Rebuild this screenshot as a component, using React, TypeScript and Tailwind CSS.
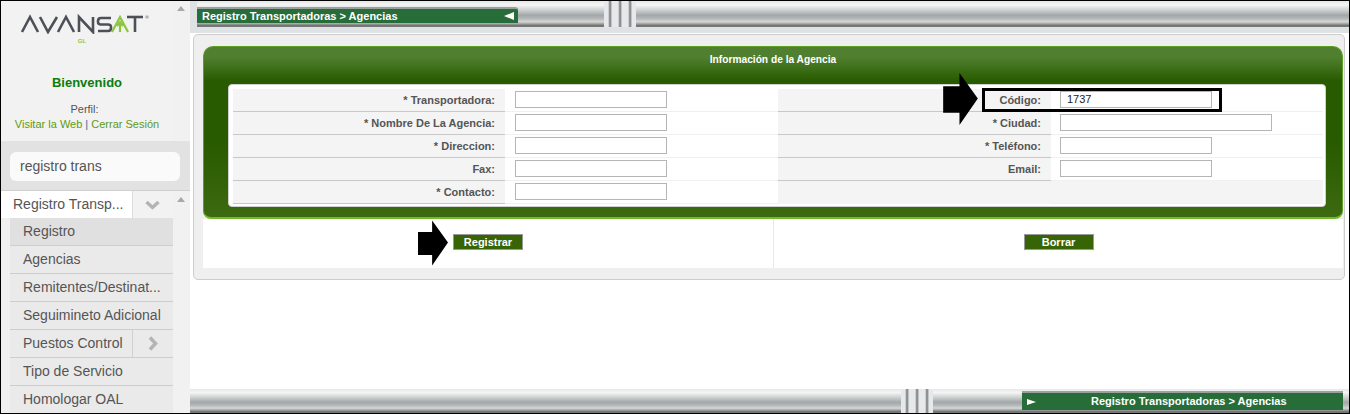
const font = "font-['Liberation_Sans',Arial,sans-serif]";

const menu = [
  { label: "Registro", active: true },
  { label: "Agencias" },
  { label: "Remitentes/Destinat..." },
  { label: "Seguimineto Adicional" },
  { label: "Puestos Control", more: true },
  { label: "Tipo de Servicio" },
  { label: "Homologar OAL" },
];

const fields = [
  { left: "* Transportadora:", right: "Código:", value: "1737" },
  { left: "* Nombre De La Agencia:", right: "* Ciudad:", wide: true },
  { left: "* Direccion:", right: "* Teléfono:" },
  { left: "Fax:", right: "Email:" },
  { left: "* Contacto:" },
];

function Logo() {
  return (
    <svg width="135" height="20" viewBox="0 0 135 20" className="block" role="img" aria-label="Avansat">
      <g fill="none" stroke="#4d5157" strokeWidth="2.6">
        <polyline points="2,18 10,3 18,18" />
        <polyline points="20,3 28,18 37,3" />
        <polyline points="38,18 46,3 54,18" />
        <polyline points="59,18 59,3 73,18 73,3" />
        <path d="M91 4 H81 Q78 4 78 7 V8 Q78 10.500 81 10.500 H88 Q91 10.500 91 13 V14 Q91 17 88 17 H78" />
        <polyline points="107,3 123,3" />
        <polyline points="115,3 115,18" />
      </g>
      <g fill="none" stroke="#8cc63f" strokeWidth="2.2">
        <polyline points="92,18 100,3 108,18" />
        <line x1="100" y1="9" x2="100" y2="18" />
        <polyline points="97,12 100,8 103,12" />
      </g>
      <circle cx="127" cy="3" r="1.800" fill="#b5b5b5" />
    </svg>
  );
}

function Grip() {
  return (
    <div className="flex w-[32px] h-full bg-[#e6e9eb]">
      <div className="w-[4px] ml-[4px] h-full bg-gradient-to-r from-[#eee] via-[#777] to-[#ddd]" />
      <div className="w-[4px] ml-[6px] h-full bg-gradient-to-r from-[#eee] via-[#777] to-[#ddd]" />
      <div className="w-[4px] ml-[6px] h-full bg-gradient-to-r from-[#eee] via-[#777] to-[#ddd]" />
    </div>
  );
}

const barBg =
  "bg-[linear-gradient(to_bottom,#e6e8e8_0%,#f4f5f5_15%,#c8cbcb_38%,#a3a7a7_55%,#b5b8b8_68%,#d6d8d8_80%,#a0a2a2_88%,#666_96%,#888_100%)]";

function Arrow({ className }: { className: string }) {
  return (
    <svg viewBox="0 0 34 51" className={className}>
      <polygon points="0,13 16,13 16,0 34,25 16,51 16,39 0,39" fill="#000" />
    </svg>
  );
}

function Field({ wide, value }: { wide?: boolean; value?: string }) {
  return (
    <input
      readOnly
      value={value ?? ""}
      className={`${wide ? "w-[212px]" : "w-[152px]"} h-[17px] border border-[#b5b5b5] bg-white px-[6px] text-[11px] text-[#222] ${font}`}
    />
  );
}

function Label({ text }: { text?: string }) {
  return (
    <div className={`h-[23px] bg-[#f4f4f4] flex items-center justify-end pr-[10px] text-[11px] font-bold text-[#555] ${text ? "border-b border-[#c8c8c8]" : ""}`}>
      {text}
    </div>
  );
}

export default function App() {
  return (
    <div className={`${font} relative flex w-[1350px] h-[414px] overflow-hidden bg-white border-t border-l border-r border-b border-black`}>
      {/* lateral */}
      <aside className="w-[189px] h-full shrink-0 flex flex-col bg-[#f0f0f0]">
        <div className="flex">
          <div className="w-[172px] h-[140px] bg-[#f2f2f2] flex flex-col items-center">
            <div className="mt-[13px] ml-[19px] self-start">
              <Logo />
            </div>
            <div className="mt-[3px] -ml-[10px] text-[6px] leading-[8px] font-bold text-[#8cc63f]">GL</div>
            <div className="mt-[28px] text-[13px] leading-[20px] font-bold text-[#0b7d0b]">Bienvenido</div>
            <div className="mt-[8px] -ml-[5px] text-[11px] leading-[16px] text-[#555]">Perfil:</div>
            <div className="text-[11px] leading-[15px] text-[#5f9a12] whitespace-nowrap">
              Visitar la Web <span className="text-[#2f6f9f]">|</span> Cerrar Sesión
            </div>
          </div>
          <div className="relative flex-1 bg-[#f1f1f1]">
            <div className="absolute left-[4px] top-[5px] border-x-[4px] border-x-transparent border-b-[5px] border-b-[#a8a8a8]" />
          </div>
        </div>
        <div className="h-[50px] shrink-0 bg-[#e2e2e2] border-b border-[#cfcfcf] pl-[9px] pt-[11px]">
          <div className="w-[170px] h-[29px] rounded-[6px] bg-[#fafafa] flex items-center pl-[10px] text-[14px] text-[#555]">
            registro trans
          </div>
        </div>
        <div className="flex flex-1 min-h-0">
          <div className="w-[172px] shrink-0 flex flex-col bg-[#f0f0f0]">
            <div className="h-[27px] shrink-0 flex bg-white">
              <div className="w-[132px] pl-[12px] text-[14px] leading-[27px] text-[#555] border-r border-[#ddd] whitespace-nowrap">
                Registro Transp...
              </div>
              <div className="flex-1 flex items-center justify-center bg-[#f2f2f2] pr-[1px]">
                <svg width="15" height="10" viewBox="0 0 15 10">
                  <polyline points="1.500,2 7.500,7.500 13.500,2" fill="none" stroke="#b4b4b4" strokeWidth="3.500" />
                </svg>
              </div>
            </div>
            {menu.map((item) => (
              <div
                key={item.label}
                className={`ml-[9px] h-[28px] shrink-0 flex border-b border-[#cdcdcd] ${item.active ? "bg-[#e0e0e0]" : "bg-[#eaeaea]"}`}
              >
                <div className={`${item.more ? "w-[123px] border-r border-[#d0d0d0]" : "w-full"} pl-[13px] whitespace-nowrap text-[14px] leading-[27px] text-[#555]`}>
                  {item.label}
                </div>
                {item.more && (
                  <div className="flex-1 flex items-center justify-center">
                    <svg width="10" height="15" viewBox="0 0 10 15">
                      <polyline points="2,1.500 7.500,7.500 2,13.500" fill="none" stroke="#b4b4b4" strokeWidth="3.500" />
                    </svg>
                  </div>
                )}
              </div>
            ))}
          </div>
          <div className="relative flex-1 bg-[#f1f1f1]">
            <div className="absolute left-[4px] top-[6px] border-x-[4px] border-x-transparent border-b-[5px] border-b-[#a8a8a8]" />
          </div>
        </div>
      </aside>

      {/* contenido */}
      <main className="flex-1 min-w-0 flex flex-col">
        <div className="h-[26px] shrink-0 flex items-start pt-[6px] pl-[7px] bg-[#dee2e5] relative">
          <div className={`absolute left-[7px] right-0 top-0 bottom-0 flex ${barBg}`}>
            <div className="ml-[407px]">
              <Grip />
            </div>
          </div>
          <div className="relative w-[321px] h-[16px] shrink-0 bg-[#276d3a] border-t-2 border-[#9aa09c] rounded-tr-[3px] pl-[5px] pr-[3px] flex items-center justify-between text-[11px] font-bold text-white">
            <span>Registro Transportadoras &gt; Agencias</span>
            <span className="border-y-[4px] border-y-transparent border-r-[10px] border-r-white mr-[1px]" />
          </div>
        </div>
        <div className="h-[6px] shrink-0 bg-[#dee2e5]" />

        <div className="ml-[3px] w-[1152px] h-[246px] shrink-0 mt-[1px] bg-[#efefef] border border-[#cccccc] rounded-[5px] px-[9px] pt-[11px]">
          <div className="w-[1140px] h-[173px] bg-[linear-gradient(to_bottom,#50802f_0%,#50802f_6%,#285a00_20%,#285a00_30%,#285a00_55%,#3c6a10_100%)] border border-[#5e9e25] border-b-2 border-b-[#74b82c] rounded-t-[10px] rounded-b-[8px] pt-[37px] pl-[24px] relative">
            <div className="absolute left-0 right-0 top-[6px] text-center text-[10.200px] leading-[14px] font-bold text-white">
              Información de la Agencia
            </div>
            <div className="w-[1098px] h-[123px] bg-white rounded-[4px] border border-[#d0d0d0] px-[4px] pt-[4px] pb-[4px]">
              <div className="grid grid-cols-[272px_273px_273px_272px]">
                {fields.map((f) => (
                  <div key={f.left} className="contents">
                    <Label text={f.left} />
                    <div className="h-[23px] flex items-center pl-[10px] pb-[2px] border-b border-[#f0f0f0]">
                      <Field />
                    </div>
                    <Label text={f.right} />
                    <div className={`h-[23px] flex items-center pl-[9px] pb-[2px] border-b border-[#f0f0f0] ${f.right ? "" : "bg-[#f4f4f4]"}`}>
                      {f.right && <Field wide={f.wide} value={f.value} />}
                    </div>
                  </div>
                ))}
              </div>
            </div>
          </div>
          <div className="w-[1140px] h-[49px] bg-white flex">
            <div className="w-[571px] border-r border-[#e8e8e8] flex items-center justify-center pb-[3px]">
              <button className="w-[70px] h-[16px] bg-[#376404] border border-[#999] text-[11px] leading-[14px] font-bold text-white">Registrar</button>
            </div>
            <div className="flex-1 flex items-center justify-center pb-[3px]">
              <button className="w-[70px] h-[16px] bg-[#376404] border border-[#999] text-[11px] leading-[14px] font-bold text-white">Borrar</button>
            </div>
          </div>
        </div>

        <div className="mt-auto h-[24px] shrink-0 flex items-start pt-[2px] relative">
          <div className={`absolute inset-0 flex ${barBg}`}>
            <div className="ml-[711px]">
              <Grip />
            </div>
          </div>
          <div className="relative ml-auto mr-[6px] w-[321px] h-[19px] bg-[#276d3a] border-t-2 border-[#9aa09c] pl-[5px] flex items-center text-[11px] font-bold text-white">
            <span className="border-y-[3px] border-y-transparent border-l-[9px] border-l-white" />
            <span className="ml-[55px]">Registro Transportadoras &gt; Agencias</span>
          </div>
        </div>
      </main>

      {/* marcas encima del formulario */}
      <div className="absolute left-[981px] top-[87px] w-[240px] h-[24px] border-[3px] border-black" />
      <Arrow className="absolute left-[942px] top-[72px] w-[35px] h-[52px]" />
      <Arrow className="absolute left-[417px] top-[219px] w-[30px] h-[46px]" />
    </div>
  );
}
